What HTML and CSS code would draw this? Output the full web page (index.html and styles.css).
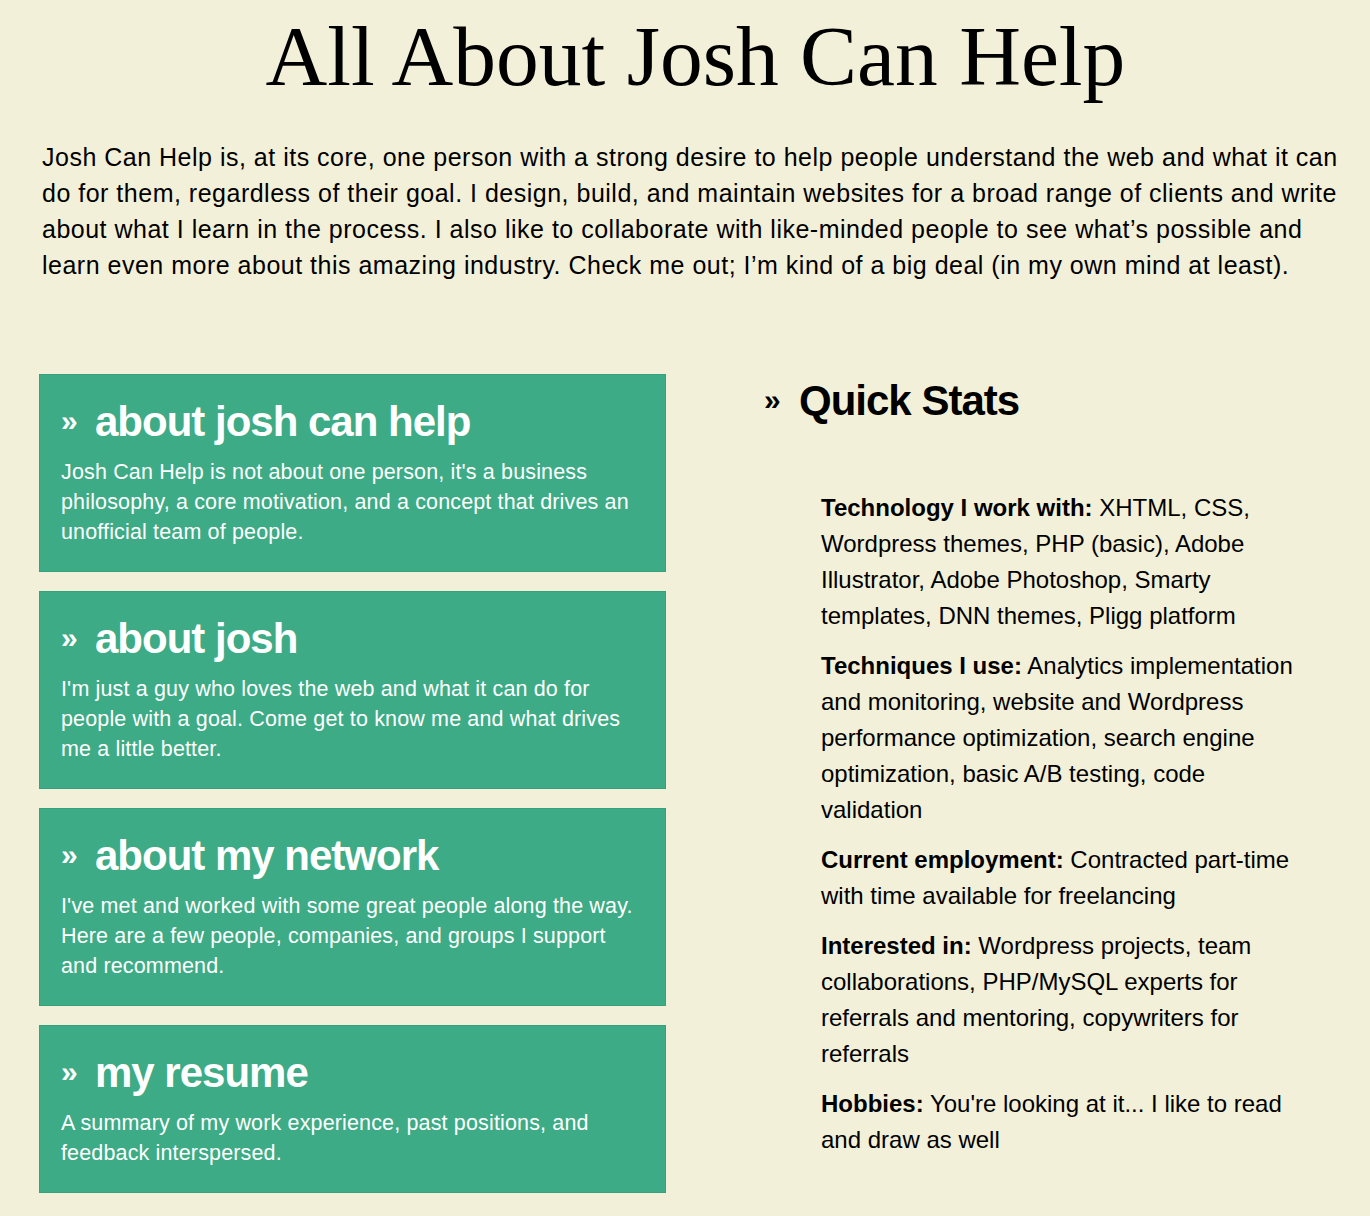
FILE: index.html
```html
<!DOCTYPE html>
<html lang="en">
<head>
<meta charset="utf-8">
<title>All About Josh Can Help</title>
<link rel="stylesheet" href="styles.css">
</head>
<body>
<div class="page">
  <h1 class="title">All About Josh Can Help</h1>
  <p class="intro">Josh Can Help is, at its core, one person with a strong desire to help people understand the web and what it can do for them, regardless of their goal. I design, build, and maintain websites for a broad range of clients and write about what I learn in the process. I also like to collaborate with like-minded people to see what’s possible and learn even more about this amazing industry. Check me out; I’m kind of a big deal (in my own mind at least).</p>
  <div class="columns">
    <div class="cards">
      <div class="card">
        <h2 class="card-title"><span class="raquo">»</span>about josh can help</h2>
        <p class="card-text">Josh Can Help is not about one person, it's a business philosophy, a core motivation, and a concept that drives an unofficial team of people.</p>
      </div>
      <div class="card">
        <h2 class="card-title"><span class="raquo">»</span>about josh</h2>
        <p class="card-text">I'm just a guy who loves the web and what it can do for people with a goal. Come get to know me and what drives me a little better.</p>
      </div>
      <div class="card">
        <h2 class="card-title"><span class="raquo">»</span>about my network</h2>
        <p class="card-text">I've met and worked with some great people along the way. Here are a few people, companies, and groups I support and recommend.</p>
      </div>
      <div class="card">
        <h2 class="card-title"><span class="raquo">»</span>my resume</h2>
        <p class="card-text">A summary of my work experience, past positions, and feedback interspersed.</p>
      </div>
    </div>
    <div class="stats">
      <h2 class="stats-title"><span class="raquo">»</span>Quick Stats</h2>
      <ul class="stats-list">
        <li><b>Technology I work with:</b> XHTML, CSS, Wordpress themes, PHP (basic), Adobe Illustrator, Adobe Photoshop, Smarty templates, DNN themes, Pligg platform</li>
        <li><b>Techniques I use:</b> Analytics implementation and monitoring, website and Wordpress performance optimization, search engine optimization, basic A/B testing, code validation</li>
        <li><b>Current employment:</b> Contracted part-time with time available for freelancing</li>
        <li><b>Interested in:</b> Wordpress projects, team collaborations, PHP/MySQL experts for referrals and mentoring, copywriters for referrals</li>
        <li><b>Hobbies:</b> You're looking at it... I like to read and draw as well</li>
      </ul>
    </div>
  </div>
</div>
</body>
</html>
```

FILE: styles.css
```css
html, body {
  margin: 0;
  padding: 0;
  background: #f3f0d9;
}
body {
  font-family: "Liberation Sans", Arial, Helvetica, sans-serif;
  color: #000;
}
.page {
  padding: 0 8px 0 39px;
}
.title {
  font-family: "Liberation Serif", "Times New Roman", serif;
  font-weight: normal;
  font-size: 85.5px;
  line-height: 84px;
  text-align: center;
  margin: 14px 10px 41px 0;
}
.intro {
  font-size: 25px;
  line-height: 36px;
  letter-spacing: 0.5px;
  margin: 0 0 91px 3px;
}
.columns {
  display: grid;
  grid-template-columns: 627px 1fr;
  column-gap: 98px;
  align-items: start;
}
.cards {
  display: flex;
  flex-direction: column;
  gap: 19px;
}
.card {
  background: #3dab85;
  border: 1px solid #36a27d;
  padding: 22px 21px 24px;
  color: #fff;
}
.card-title {
  font-size: 42px;
  line-height: 48px;
  font-weight: bold;
  letter-spacing: -1px;
  margin: 0 0 11px;
}
.raquo {
  display: inline-block;
  width: 34px;
  font-size: 30px;
  vertical-align: 5px;
  letter-spacing: 0;
}
.stats-title .raquo {
  width: 35px;
}
.card-text {
  font-size: 21.5px;
  line-height: 30px;
  letter-spacing: 0.15px;
  margin: 0;
}
.stats-title {
  font-size: 42px;
  line-height: 48px;
  font-weight: bold;
  letter-spacing: -1px;
  margin: 2px 0 0;
}
.stats-list {
  list-style: none;
  margin: 65px 0 0;
  padding: 0 0 0 57px;
  width: 482px;
}
.stats-list li {
  font-size: 24px;
  line-height: 36px;
  margin-bottom: 14px;
}
```
